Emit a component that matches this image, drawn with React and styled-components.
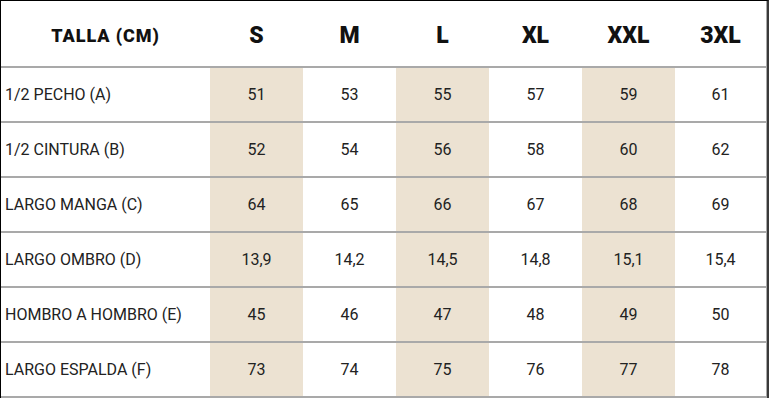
import styled, { createGlobalStyle } from "styled-components";

const GlobalStyle = createGlobalStyle`
  html, body {
    margin: 0;
    padding: 0;
    background: #ffffff;
  }
  body {
    font-family: Roboto, "Liberation Sans", Arial, sans-serif;
    color: #1f1f1f;
  }
`;

// Tabla de tallas
const Sheet = styled.div`
  width: 769px;
  box-sizing: border-box;
  border-top: 1px solid #000;
  border-left: 1px solid #000;
  border-right: 2px solid #3a3a3a;
  background: #fff;
`;

const Row = styled.div`
  display: grid;
  grid-template-columns: 209px repeat(5, 93px) 92px;
  height: ${(p) => (p.$head ? "65px" : "53px")};
  border-bottom: 2px solid #a9a9a9;
`;

const Cell = styled.div`
  display: flex;
  align-items: center;
  justify-content: center;
  background: ${(p) => (p.$shade ? "#ece2d2" : "#ffffff")};
  font-size: 16px;
  color: #222;
  &:last-child {
    border-right: 1px solid #a9a9a9;
  }
`;

const HeadCell = styled(Cell)`
  background: #ffffff;
  font-weight: 900;
  font-size: 23px;
  color: #111;
  padding-top: 3px;
`;

const TitleCell = styled(HeadCell)`
  font-size: 18px;
  letter-spacing: 0.9px;
`;

const Label = styled(Cell)`
  justify-content: flex-start;
  padding-left: 4px;
  font-size: 16px;
  background: #ffffff;
`;

const sizes = ["S", "M", "L", "XL", "XXL", "3XL"];

const rows = [
  { label: "1/2 PECHO (A)", values: ["51", "53", "55", "57", "59", "61"] },
  { label: "1/2 CINTURA (B)", values: ["52", "54", "56", "58", "60", "62"] },
  { label: "LARGO MANGA (C)", values: ["64", "65", "66", "67", "68", "69"] },
  { label: "LARGO OMBRO (D)", values: ["13,9", "14,2", "14,5", "14,8", "15,1", "15,4"] },
  { label: "HOMBRO A HOMBRO (E)", values: ["45", "46", "47", "48", "49", "50"] },
  { label: "LARGO ESPALDA (F)", values: ["73", "74", "75", "76", "77", "78"] },
];

const App = () => {
  return (
    <>
      <GlobalStyle />
      <Sheet>
        <Row $head>
          <TitleCell>TALLA (CM)</TitleCell>
          {sizes.map((s) => (
            <HeadCell key={s}>{s}</HeadCell>
          ))}
        </Row>
        {rows.map((r) => (
          <Row key={r.label}>
            <Label>{r.label}</Label>
            {r.values.map((v, i) => (
              <Cell key={i} $shade={i % 2 === 0}>
                {v}
              </Cell>
            ))}
          </Row>
        ))}
      </Sheet>
    </>
  );
};

export default App;
